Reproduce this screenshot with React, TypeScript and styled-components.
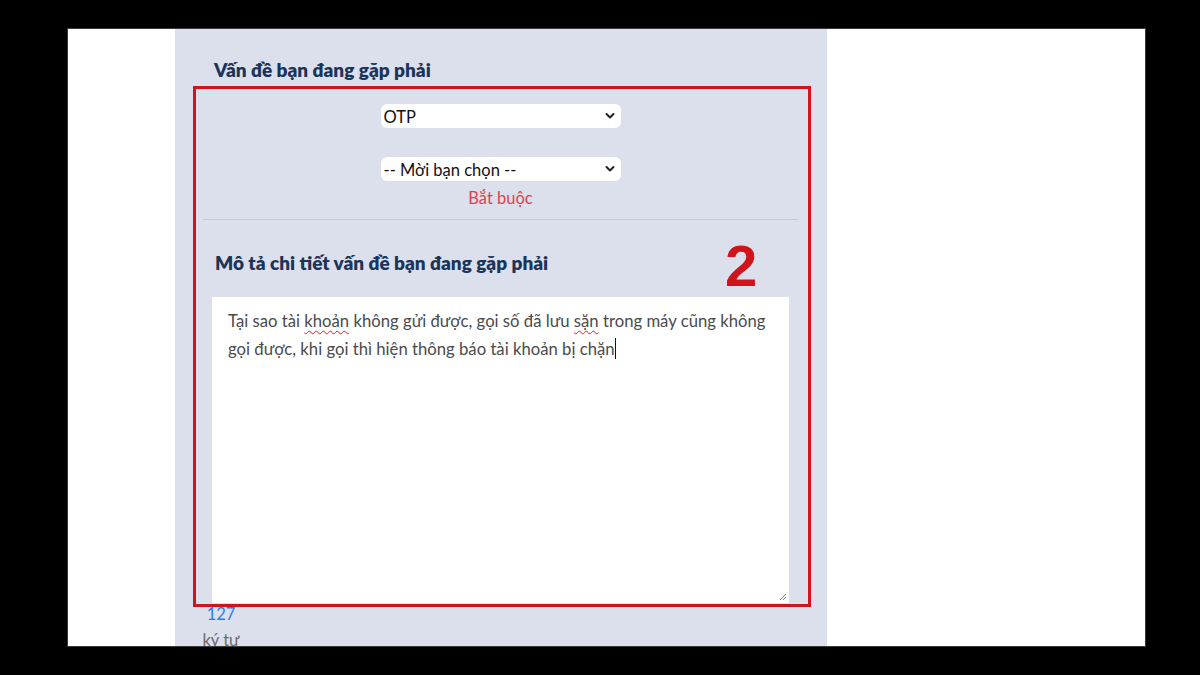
import React from "react";
import styled, { createGlobalStyle } from "styled-components";

const Global = createGlobalStyle`
  html, body { margin: 0; padding: 0; background: #000; }
  body { width: 1200px; height: 675px; overflow: hidden; font-family: Lato, "Noto Sans", sans-serif; }
  * { box-sizing: border-box; }
`;

const Screen = styled.div`
  width: 1200px;
  height: 675px;
  background: #000;
  padding: 29px 55px 29px 68px;
`;

const Frame = styled.div`
  width: 1077px;
  height: 617px;
  background: #fff;
  overflow: hidden;
  padding-left: 107px;
  box-shadow: 0 0 0 1px #3a3a3a;
`;

const Panel = styled.div`
  position: relative;
  width: 652px;
  min-height: 700px;
  background: #dce0ec;
  padding: 29px 29px 0 28px;
  display: flex;
  flex-direction: column;
`;

const Heading = styled.h2<{ $indent: number }>`
  margin: 0 0 0 ${(p) => p.$indent}px;
  font-family: Lato, "Noto Sans", sans-serif;
  font-weight: 800;
  font-size: 19px;
  line-height: 24px;
  color: #1b3459;
`;

const Selects = styled.div`
  display: flex;
  flex-direction: column;
  align-items: center;
  gap: 29px;
  margin-top: 22px;
`;

const SelectWrap = styled.div`
  position: relative;
  width: 240px;
  height: 24px;
`;

const Select = styled.select`
  appearance: none;
  -webkit-appearance: none;
  width: 100%;
  height: 100%;
  border: none;
  border-radius: 6px;
  background: #fff;
  padding: 2px 0 0 3px;
  font-family: Lato, "Noto Sans", sans-serif;
  font-size: 16.5px;
  color: #111;
  outline: none;
`;

const Chevron = styled.svg`
  position: absolute;
  right: 6px;
  top: 8px;
  pointer-events: none;
`;

const Required = styled.div`
  margin-top: 7px;
  text-align: center;
  font-size: 16.5px;
  line-height: 20px;
  color: #e0404c;
`;

const Divider = styled.hr`
  margin: 11px 0 0;
  border: none;
  height: 1px;
  background: #c6cad6;
`;

const DescHeading = styled(Heading)`
  margin-top: 31px;
`;

const TextBox = styled.div`
  position: relative;
  margin: 22px 9px 0;
  height: 306px;
  background: #fff;
  padding: 10px 8px 10px 16px;
  font-family: Lato, "Noto Sans", sans-serif;
  font-size: 16.7px;
  line-height: 28px;
  color: #4b4b4b;
`;

const Misspelled = styled.span`
  text-decoration: underline wavy #e02020;
  text-decoration-thickness: 1px;
  text-underline-offset: 3px;
`;

const Caret = styled.span`
  display: inline-block;
  width: 1px;
  height: 21px;
  background: #111;
  vertical-align: -4px;
`;

const Grip = styled.svg`
  position: absolute;
  right: 2px;
  bottom: 2px;
`;

const Counter = styled.div`
  width: 36px;
  display: flex;
  flex-direction: column;
  align-items: center;
  margin-top: -2px;
  font-size: 16.5px;
  line-height: 26px;
  white-space: nowrap;
`;

const Count = styled.span`
  color: #2a7bf0;
`;

const Unit = styled.span`
  color: #6b6b6b;
`;

const Highlight = styled.div`
  position: absolute;
  left: 18px;
  top: 57px;
  width: 618px;
  height: 521px;
  border: 3px solid #d0141c;
  pointer-events: none;
`;

const StepNumber = styled.div`
  position: absolute;
  left: 550px;
  top: 204px;
  font-family: "Liberation Sans", Arial, sans-serif;
  font-weight: 700;
  font-size: 58px;
  line-height: 66px;
  color: #d0141c;
`;

const ChevronIcon = () => (
  <Chevron width="10" height="8" viewBox="0 0 10 8">
    <path d="M1.5 2 L5 5.5 L8.5 2" fill="none" stroke="#222" strokeWidth="2" strokeLinecap="round" strokeLinejoin="round" />
  </Chevron>
);

export default function App() {
  return (
    <>
      <Global />
      <Screen>
        <Frame>
          <Panel>
            <Heading $indent={11}>Vấn đề bạn đang gặp phải</Heading>
            <Selects>
              <SelectWrap>
                <Select defaultValue="otp">
                  <option value="otp">OTP</option>
                </Select>
                <ChevronIcon />
              </SelectWrap>
              <SelectWrap>
                <Select defaultValue="">
                  <option value="">-- Mời bạn chọn --</option>
                </Select>
                <ChevronIcon />
              </SelectWrap>
            </Selects>
            <Required>Bắt buộc</Required>
            <Divider />
            <DescHeading $indent={12}>Mô tả chi tiết vấn đề bạn đang gặp phải</DescHeading>
            <TextBox>
              Tại sao tài <Misspelled>khoản</Misspelled> không gửi được, gọi số đã lưu{" "}
              <Misspelled>sặn</Misspelled> trong máy cũng không gọi được, khi gọi thì hiện thông báo tài khoản bị chặn
              <Caret />
              <Grip width="10" height="10" viewBox="0 0 10 10">
                <path d="M9 3 L3 9 M9 6 L6 9" stroke="#777" strokeWidth="1" />
              </Grip>
            </TextBox>
            <Counter>
              <Count>127</Count>
              <Unit>ký tự</Unit>
            </Counter>
            <Highlight />
            <StepNumber>2</StepNumber>
          </Panel>
        </Frame>
      </Screen>
    </>
  );
}
